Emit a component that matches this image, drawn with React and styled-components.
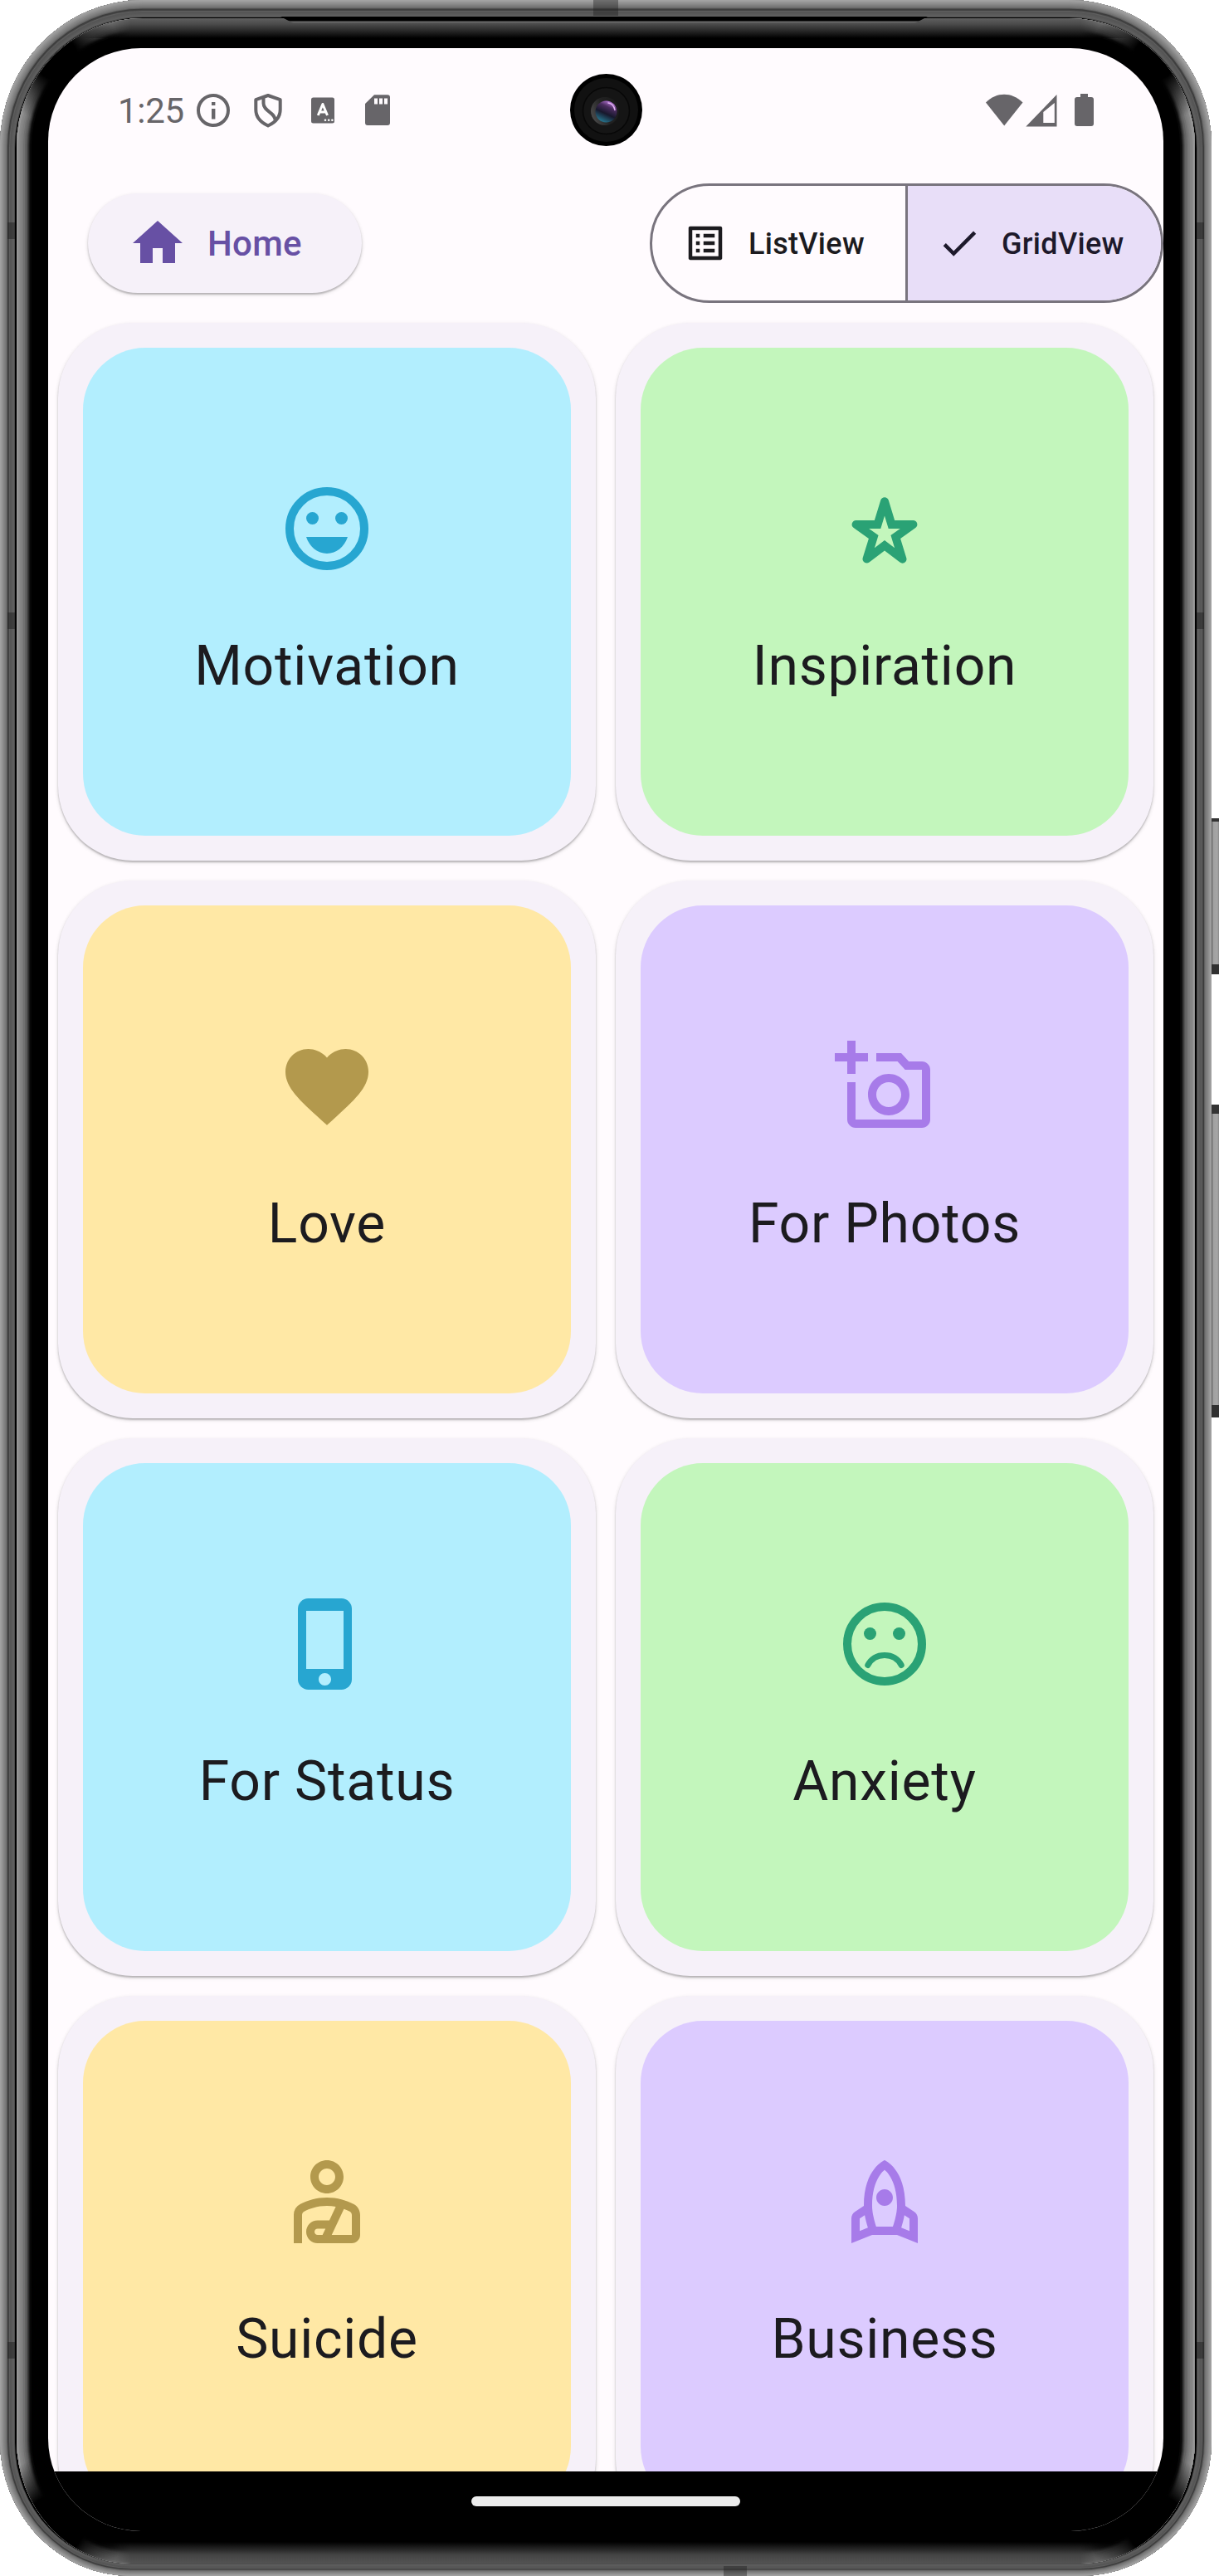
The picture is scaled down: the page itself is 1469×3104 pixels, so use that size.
import React from "react";
import styled, { createGlobalStyle } from "styled-components";
import {
  MdHome,
  MdOutlineListAlt,
  MdCheck,
  MdFavorite,
  MdPhoneIphone,
  MdOutlinePersonalInjury,
  MdOutlineRocket,
} from "react-icons/md";

const GlobalStyle = createGlobalStyle`
  * { box-sizing: border-box; }
  body { margin: 0; background: #fff; font-family: Roboto, "Liberation Sans", sans-serif; }
  svg { display: block; flex: none; }
`;

/* Metal rim, from the outer edge inwards: [depth in px, colour] */
const RIM = [
  [1, "#a2a2a2"], [2, "#9c9c9c"], [3, "#969696"], [4, "#8e8e8e"], [5, "#878787"],
  [6, "#808080"], [7, "#7a7a7a"], [8, "#727272"], [9, "#606060"], [10, "#3c3c3c"],
  [11, "#444444"], [12, "#5e5e5e"], [13, "#565656"], [14, "#575757"], [15, "#5a5a5a"],
  [16, "#5d5d5d"], [17, "#606060"], [18, "#4c4c4c"],
];

/* Polished bevel between the rim and the glass */
const BEVEL = [
  [1, "#8f8f8f"], [2, "#9b9b9b"], [4, "#8a8a8a"], [6, "#848484"], [8, "#7c7c7c"],
  [10, "#707070"], [12, "#626262"], [13, "#525252"], [14, "#404040"], [15, "#2c2c2c"],
  [16, "#181818"], [18, "#080808"],
];

const Stage = styled.main`
  position: relative;
  width: 1469px;
  height: 3104px;
  overflow: hidden;
  background: #fff;
`;

const Device = styled.div`
  position: relative;
  width: 1460px;
  height: 3104px;
  padding: 58px 58px 54px;
  background: #000;
  border-radius: 172px 172px 158px 158px / 176px 176px 164px 164px;
  box-shadow: ${RIM.map(([d, c]) => `inset 0 ${(d * 0.17).toFixed(1)}px 0 ${d}px ${c}`).join(", ")};
`;

const Bevel = styled.div`
  position: absolute;
  inset: 22px 20px 15px;
  overflow: hidden;
  border-radius: 152px 152px 138px 138px / 154px 154px 149px 149px;
  box-shadow: ${BEVEL.map(([d, c]) => `inset 0 0 0 ${d}px ${c}`).join(", ")};

  &::after {
    content: "";
    position: absolute;
    inset: 0;
    background:
      radial-gradient(circle at 48px 48px, #000 26px, transparent 78px),
      radial-gradient(circle at calc(100% - 48px) 48px, #000 26px, transparent 78px),
      radial-gradient(circle at 46px calc(100% - 46px), #000 36px, transparent 84px),
      radial-gradient(circle at calc(100% - 46px) calc(100% - 46px), #000 36px, transparent 84px);
  }
`;

const TopShade = styled.div`
  position: absolute;
  left: 78px;
  right: 78px;
  top: 0;
  height: 24px;
  background: linear-gradient(#606060, #4a4a4a 30%, #262626 65%, #000);
  mask-image: linear-gradient(90deg, transparent, #000 60px calc(100% - 60px), transparent);
`;

const BottomShade = styled.div`
  position: absolute;
  left: 78px;
  right: 78px;
  bottom: 0;
  height: 26px;
  background: linear-gradient(#000, #1c1c1c 25%, #444 60%, #545454);
  mask-image: linear-gradient(90deg, transparent, #000 60px calc(100% - 60px), transparent);
`;

const Earpiece = styled.div`
  position: absolute;
  left: 338px;
  width: 780px;
  top: 20px;
  height: 8px;
  background: linear-gradient(#000 5px, #6c6c6c 6px, #585858);
  clip-path: polygon(0 0, 100% 0, 98% 100%, 2% 100%);
`;

const Band = styled.div`
  position: absolute;
  left: ${(p) => p.$x}px;
  top: ${(p) => p.$y}px;
  width: ${(p) => p.$w}px;
  height: ${(p) => p.$h}px;
  background: rgba(30, 30, 30, ${(p) => p.$alpha || 0.5});
`;

const SideButton = styled.div`
  position: absolute;
  left: 1460px;
  top: ${(p) => p.$top}px;
  width: 9px;
  height: ${(p) => p.$height}px;
  border-top: ${(p) => p.$cap}px solid #333;
  border-bottom: ${(p) => p.$foot}px solid #303030;
  background: linear-gradient(90deg, #555, #a0a0a0 2px, #a6a6a6 7px, #8a8a8a);
`;

const Screen = styled.div`
  display: flex;
  flex-direction: column;
  position: relative;
  width: 1344px;
  height: 2992px;
  overflow: hidden;
  background: #fffbfe;
  border-radius: 112px;
`;

const StatusBar = styled.div`
  display: flex;
  align-items: center;
  flex: none;
  height: 150px;
  padding: 0 83px 0 84px;
  color: #676569;
`;

const Clock = styled.span`
  width: 90px;
  margin-top: 2px;
  font-size: 42px;
  line-height: 48px;
  letter-spacing: -0.3px;
`;

const StatusIcons = styled.div`
  display: flex;
  align-items: center;
  margin-left: ${(p) => (p.$end ? "auto" : "5px")};
`;

const Camera = styled.div`
  position: absolute;
  left: 629px;
  top: 31px;
  width: 87px;
  height: 87px;
`;

const AppBar = styled.div`
  display: flex;
  align-items: center;
  justify-content: space-between;
  flex: none;
  height: 169px;
  padding: 1px 0 0 48px;
`;

const HomeButton = styled.button`
  display: flex;
  align-items: center;
  gap: 24px;
  width: 330px;
  height: 120px;
  padding: 0 0 0 48px;
  border: 0;
  border-radius: 60px;
  background: #f6f1f9;
  color: #6750a4;
  font: 500 42px/60px Roboto, "Liberation Sans", sans-serif;
  letter-spacing: 0.3px;
  box-shadow: 0 2px 2px rgba(0, 0, 0, 0.2), 0 2px 5px rgba(0, 0, 0, 0.14);
`;

const ButtonText = styled.span`
  padding-top: 2px;
`;

const Segmented = styled.div`
  display: flex;
  width: 619px;
  height: 144px;
  overflow: hidden;
  border: 3px solid #79747e;
  border-radius: 72px;
`;

const Segment = styled.button`
  display: flex;
  align-items: center;
  gap: ${(p) => (p.$selected ? 24 : 25)}px;
  width: ${(p) => (p.$selected ? 308 : 305)}px;
  flex: none;
  padding: 0 0 0 ${(p) => (p.$selected ? 35 : 37)}px;
  border: 0;
  border-left: ${(p) => (p.$selected ? "3px solid #79747e" : "0")};
  background: ${(p) => (p.$selected ? "#e8def8" : "transparent")};
  color: ${(p) => (p.$selected ? "#1d192b" : "#1c1b1f")};
  font: 500 36px/60px Roboto, "Liberation Sans", sans-serif;
  letter-spacing: 0.3px;
`;

const Grid = styled.div`
  display: grid;
  grid-template-columns: 648px 648px;
  grid-auto-rows: 648px;
  gap: 24px;
  flex: 1;
  min-height: 0;
  padding: 12px;
  overflow: hidden;
`;

const Card = styled.div`
  padding: 30px;
  border-radius: 90px;
  background: #f6f1f9;
  box-shadow: 0 2px 2px rgba(0, 0, 0, 0.2), 0 2px 5px rgba(0, 0, 0, 0.14);
`;

const Tile = styled.div`
  display: flex;
  flex-direction: column;
  align-items: center;
  height: 588px;
  padding-top: 158px;
  border-radius: 75px;
  background: ${(p) => p.$bg};
  color: ${(p) => p.$tint};
`;

const TileLabel = styled.span`
  margin-top: 57px;
  color: #1c1b1f;
  font-size: 66px;
  line-height: 98px;
  letter-spacing: 0.75px;
`;

const NavBar = styled.div`
  display: flex;
  align-items: center;
  justify-content: center;
  flex: none;
  height: 72px;
  background: #000;
`;

const Handle = styled.div`
  width: 324px;
  height: 12px;
  border-radius: 6px;
  background: #ececec;
`;

const Svg = ({ w = 120, h = w, box = "0 0 24 24", children }) => (
  <svg width={w} height={h} viewBox={box} fill="currentColor">{children}</svg>
);

const Face = ({ children }) => (
  <Svg>
    <circle cx="12" cy="12" r="9" fill="none" stroke="currentColor" strokeWidth="2" />
    <circle cx="8.5" cy="9.5" r="1.5" />
    <circle cx="15.5" cy="9.5" r="1.5" />
    {children}
  </Svg>
);

const HappyIcon = () => (
  <Face><path d="M12 18c2.28 0 4.22-1.66 5-4H7c.78 2.34 2.72 4 5 4z" /></Face>
);

const SadIcon = () => (
  <Face>
    <path d="M7.95 17.1C8.75 15.6 10.25 14.7 12 14.7s3.25.9 4.05 2.4" fill="none" stroke="currentColor" strokeWidth="1.4" strokeLinecap="round" />
  </Face>
);

const StarIcon = () => (
  <Svg>
    <path fillRule="evenodd" d="M14.43 10l-1.47-4.84c-.29-.95-1.63-.95-1.91 0L9.57 10H5.12c-.97 0-1.37 1.25-.58 1.81l3.64 2.6-1.43 4.61c-.29.93.79 1.68 1.56 1.09L12 17.31l3.69 2.81c.78.59 1.85-.16 1.56-1.09l-1.43-4.61 3.64-2.6c.79-.57.39-1.81-.58-1.81zM12 8.89L12.94 12h2.82l-2.27 1.62.93 3.01L12 14.79l-2.42 1.84.93-3.01L8.24 12h2.82z" />
  </Svg>
);

const AddPhotoIcon = () => (
  <Svg>
    <path d="M21 6h-3.17L16 4h-6v2h5.12l1.83 2H21v12H5V11H3v9c0 1.1.9 2 2 2h16c1.1 0 2-.9 2-2V8c0-1.1-.9-2-2-2zM8 14c0 2.76 2.24 5 5 5s5-2.24 5-5-2.24-5-5-5-5 2.24-5 5zm5-3c1.65 0 3 1.35 3 3s-1.35 3-3 3-3-1.35-3-3 1.35-3 3-3zM5 9V6h3V4H5V1H3v3H0v2h3v3h2z" />
  </Svg>
);

const PALETTE = {
  blue: ["#b2eefe", "#27a6d1"],
  green: ["#c3f6bc", "#2aa275"],
  yellow: ["#ffe8a5", "#b3994d"],
  purple: ["#dccbff", "#a77be9"],
};

const CATEGORIES = [
  { label: "Motivation", tone: "blue", Icon: HappyIcon },
  { label: "Inspiration", tone: "green", Icon: StarIcon },
  { label: "Love", tone: "yellow", Icon: MdFavorite },
  { label: "For Photos", tone: "purple", Icon: AddPhotoIcon },
  { label: "For Status", tone: "blue", Icon: MdPhoneIphone },
  { label: "Anxiety", tone: "green", Icon: SadIcon },
  { label: "Suicide", tone: "yellow", Icon: MdOutlinePersonalInjury },
  { label: "Business", tone: "purple", Icon: MdOutlineRocket },
];

const NotificationIcons = () => (
  <svg width="234" height="42" viewBox="0 0 234 42" fill="currentColor">
    <circle cx="20" cy="21" r="18" fill="none" stroke="currentColor" strokeWidth="4" />
    <rect x="18" y="11" width="4.4" height="4" />
    <rect x="18" y="19" width="4.4" height="12.5" />
    <g fill="none" stroke="currentColor" strokeWidth="4" strokeLinejoin="round">
      <path d="M86 3L71.3 8.200V20c0 9 6 15.500 14.700 19.500 8.700-4 14.700-10.500 14.700-19.500V8.200z" />
      <path d="M80.500 6v6.500c0 9.500 14 11 14 20" />
    </g>
    <rect x="138" y="5.500" width="28" height="31" rx="2.500" />
    <path d="M146.300 27L151.900 13.500 157.500 27M148.500 23h7" fill="none" stroke="#fff" strokeWidth="3" strokeLinejoin="round" />
    <circle cx="155" cy="32.800" r="1.300" fill="#fff" />
    <circle cx="159.200" cy="32.800" r="1.300" fill="#fff" />
    <circle cx="163.400" cy="32.800" r="1.300" fill="#fff" />
    <path fillRule="evenodd" d="M214 2.200h16a3 3 0 0 1 3 3V36a3 3 0 0 1-3 3h-24a3 3 0 0 1-3-3V13zM214 6.500v7h4v-7zM220 6.500v7h4v-7zM226 6.500v7h4v-7z" />
  </svg>
);

const SignalIcons = () => (
  <svg width="131" height="40" viewBox="0 0 131 40" fill="currentColor">
    <path d="M0 10.500C13 -2.500 31 -2.500 44.500 10.500L22.200 38.500z" />
    <path fillRule="evenodd" d="M85.500 1V39.500H48.300zM82.800 11L69.300 22V35H82.800z" />
    <path d="M114 0h9v4h4a3 3 0 0 1 3 3v29a3 3 0 0 1-3 3h-17a3 3 0 0 1-3-3V7a3 3 0 0 1 3-3h4z" />
  </svg>
);

const CameraLens = () => (
  <svg width="87" height="87" viewBox="0 0 87 87">
    <defs>
      <linearGradient id="iris" x1="0.75" y1="0.1" x2="0.35" y2="0.95">
        <stop offset="0" stopColor="#a86cc8" />
        <stop offset="0.25" stopColor="#4a2c5e" />
        <stop offset="0.6" stopColor="#17182c" />
        <stop offset="1" stopColor="#256e86" />
      </linearGradient>
      <linearGradient id="barrel" x1="0" y1="0.7" x2="1" y2="0.3">
        <stop offset="0" stopColor="#4c4c4c" />
        <stop offset="0.5" stopColor="#222" />
        <stop offset="1" stopColor="#1a1a1a" />
      </linearGradient>
    </defs>
    <circle cx="43.500" cy="43.500" r="43.500" fill="#000" />
    <circle cx="43.500" cy="43.500" r="38.500" fill="#111" />
    <circle cx="43.500" cy="44.500" r="28" fill="#151515" stroke="#070707" strokeWidth="1.500" />
    <circle cx="42" cy="45" r="17" fill="url(#barrel)" />
    <circle cx="43.500" cy="45.500" r="13" fill="url(#iris)" />
    <path d="M46 35c4 .5 7 4 8 8.500" fill="none" stroke="#e3b4f3" strokeWidth="1.500" strokeLinecap="round" />
  </svg>
);

export default function App() {
  return (
    <Stage>
      <GlobalStyle />
      <SideButton $top={986} $height={188} $cap={4} $foot={12} />
      <SideButton $top={1331} $height={377} $cap={11} $foot={15} />
      <Device>
        <Bevel>
          <TopShade />
          <BottomShade />
        </Bevel>
        <Earpiece />
        {[268, 738, 2822].map((y) => (
          <React.Fragment key={y}>
            <Band $x={9} $y={y} $w={9} $h={20} />
            <Band $x={1442} $y={y} $w={9} $h={20} />
          </React.Fragment>
        ))}
        <Band $x={715} $y={0} $w={30} $h={19} $alpha={0.4} />
        <Band $x={872} $y={3092} $w={28} $h={12} $alpha={0.4} />
        <Screen>
          <StatusBar>
            <Clock>1:25</Clock>
            <StatusIcons><NotificationIcons /></StatusIcons>
            <StatusIcons $end><SignalIcons /></StatusIcons>
          </StatusBar>
          <Camera><CameraLens /></Camera>
          <AppBar>
            <HomeButton><MdHome size={72} /><ButtonText>Home</ButtonText></HomeButton>
            <Segmented>
              <Segment><MdOutlineListAlt size={54} /><ButtonText>ListView</ButtonText></Segment>
              <Segment $selected><MdCheck size={54} /><ButtonText>GridView</ButtonText></Segment>
            </Segmented>
          </AppBar>
          <Grid>
            {CATEGORIES.map(({ label, tone, Icon }) => (
              <Card key={label}>
                <Tile $bg={PALETTE[tone][0]} $tint={PALETTE[tone][1]}>
                  <Icon size={120} />
                  <TileLabel>{label}</TileLabel>
                </Tile>
              </Card>
            ))}
          </Grid>
          <NavBar><Handle /></NavBar>
        </Screen>
      </Device>
    </Stage>
  );
}
